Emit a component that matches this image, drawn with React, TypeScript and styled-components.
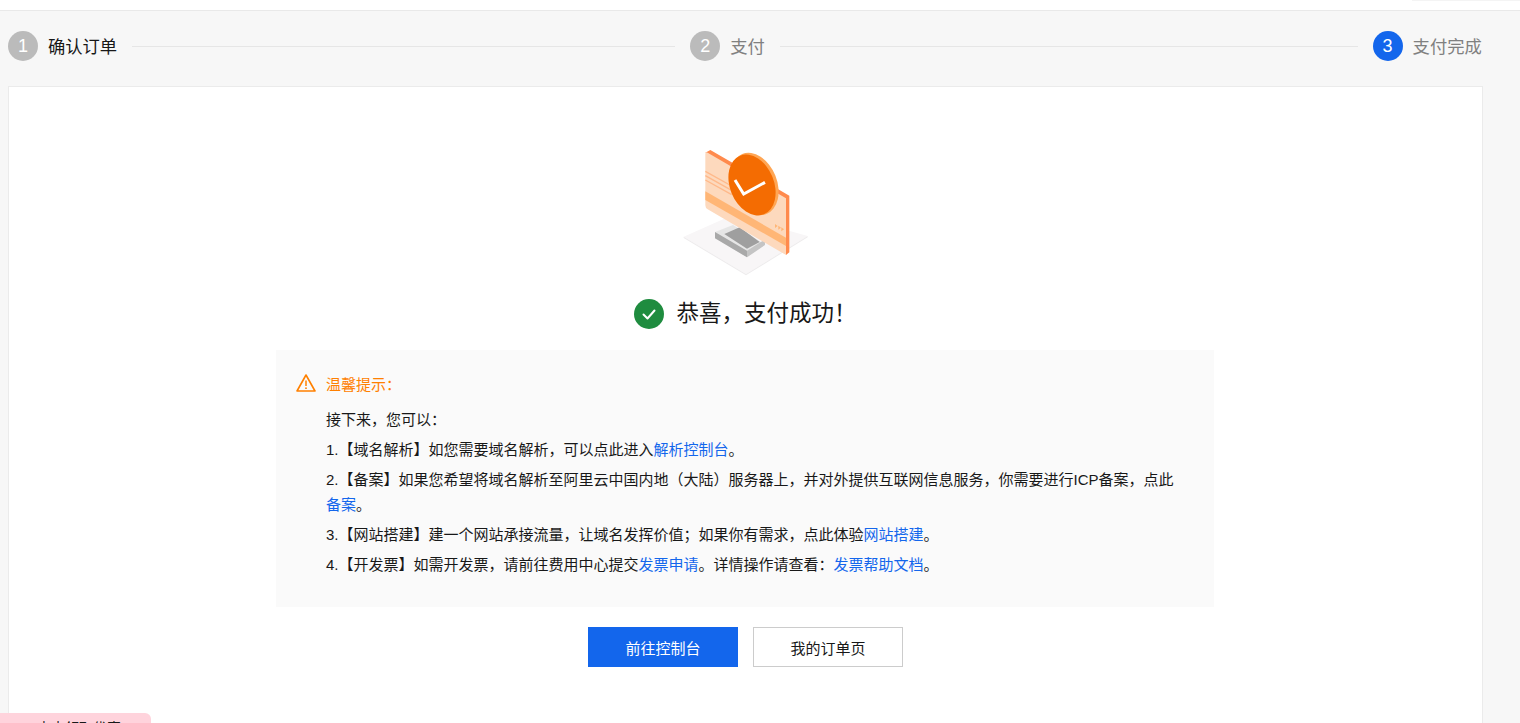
import React from "react";
import styled, { createGlobalStyle } from "styled-components";

const Global = createGlobalStyle`
  html, body { margin: 0; padding: 0; height: 723px; overflow: hidden; background: #f7f7f7; }
  body { font-family: "Liberation Sans", "Noto Sans CJK SC", sans-serif; color: #181818; }
  * { box-sizing: border-box; }
`;

const Header = styled.header`
  height: 11px;
  background: #fff;
  border-bottom: 1px solid #e9e9e9;
`;

const Main = styled.main`
  width: 1483px;
  padding-left: 8px;
`;

const Steps = styled.ol`
  display: flex;
  align-items: center;
  width: 1474.6px;
  height: 70px;
  margin: 0 0 5px;
  padding: 0;
  list-style: none;
`;

const Step = styled.li<{ $last?: boolean }>`
  display: flex;
  align-items: center;
  flex: ${(p) => (p.$last ? "0 0 110px" : "1 1 0")};
`;

const StepNumber = styled.span<{ $active?: boolean }>`
  flex: none;
  width: 30px;
  height: 30px;
  border-radius: 50%;
  display: flex;
  align-items: center;
  justify-content: center;
  font-size: 18px;
  color: #fff;
  background: ${(p) => (p.$active ? "#1366ec" : "#bbb")};
`;

const StepLabel = styled.span<{ $current?: boolean }>`
  flex: none;
  margin-left: 10px;
  padding-top: 1px;
  font-size: 17.3px;
  line-height: 30px;
  color: ${(p) => (p.$current ? "#181818" : "#808080")};
`;

const StepLine = styled.span`
  flex: 1;
  height: 1px;
  margin: 0 15px;
  background: #e6e6e6;
`;

const Card = styled.section`
  width: 1475px;
  height: 700px;
  padding-top: 43px;
  background: #fff;
  border: 1px solid #ebebeb;
  display: flex;
  flex-direction: column;
  align-items: center;
`;

const Illustration = styled.svg`
  display: block;
  width: 170px;
  height: 160px;
  flex: none;
`;

const Title = styled.h1`
  display: flex;
  align-items: center;
  gap: 12px;
  height: 30px;
  margin: 9px 0 0;
  font-size: 22.5px;
  font-weight: 400;
  line-height: 30px;
  color: #181818;
`;

const Notice = styled.div`
  width: 938px;
  height: 257px;
  margin: 21px 1px 0 0;
  padding: 21px 20px 0;
  background: #fafafa;
`;

const NoticeHead = styled.div`
  display: flex;
  align-items: center;
  gap: 10px;
  height: 24px;
  font-size: 15px;
  color: #ff8000;
`;

const NoticeBody = styled.div`
  margin-top: 12px;
  padding-left: 30px;
  padding-right: 4px;
  font-size: 15px;
  line-height: 25px;
  color: #181818;
`;

const NoticeLine = styled.p`
  margin: 0 0 5px;
`;

const Link = styled.a`
  color: #1366ec;
  text-decoration: none;
  white-space: nowrap;
`;

const Actions = styled.div`
  display: flex;
  gap: 15px;
  margin-top: 20px;
`;

const Button = styled.button<{ $primary?: boolean }>`
  width: 150px;
  height: 40px;
  padding: 0;
  font-family: inherit;
  font-size: 15px;
  color: ${(p) => (p.$primary ? "#fff" : "#181818")};
  background: ${(p) => (p.$primary ? "#1366ec" : "#fff")};
  border: 1px solid ${(p) => (p.$primary ? "#1366ec" : "#ccc")};
`;

const FloatBadge = styled.div`
  position: fixed;
  left: 0;
  top: 713px;
  width: 151px;
  height: 40px;
  padding: 5px 0 0 37px;
  font-size: 14px;
  line-height: 20px;
  color: #181818;
  background: #ffd3dc;
  border-radius: 0 6px 0 0;
`;

const HeaderTab = styled.div`
  position: fixed;
  top: 0;
  right: 0;
  width: 108px;
  height: 1px;
  background: #f4f4f4;
`;

function SuccessArt() {
  return (
    <Illustration viewBox="0 0 510 480" aria-hidden="true">
      <polygon points="68,320 215,255 440,318 255,432" fill="#f8f6f7" />
      <polygon points="68,320 255,432 440,318 440,322 255,436 68,324" fill="#eeeced" />
      <polygon points="162,306 216,285 312,343 258,381 162,325" fill="#e6e6e6" />
      <polygon points="162,306 258,362 258,382 162,325" fill="#a9a9a9" />
      <polygon points="258,362 312,328 312,345 258,382" fill="#c4c4c4" />
      <polygon points="190,312 236,292 296,336 258,356" fill="#9f9f9f" />
      <polygon points="133,68 148,60 385,197 385,367 375,375 373,208" fill="#ff8a4d" />
      <path d="M133 72 Q133 65 140 68 L375 205 L375 375 L140 238 Q133 234 133 226 Z" fill="#fdd9bd" />
      <polygon points="133,184 375,323 375,348 133,210" fill="#ffb676" />
      <path d="M133 124 L212 168 M133 137 L212 181 M133 150 L212 194" stroke="#ffb98a" strokeWidth="4" fill="none" />
      <polygon points="342,282 350,288 342,294" fill="#ffb676" />
      <polygon points="352,287 360,293 352,299" fill="#ffb676" />
      <polygon points="361,292 369,298 361,304" fill="#ffb676" />
      <ellipse cx="280" cy="162" rx="68" ry="97" transform="rotate(-22 280 162)" fill="#ffa654" />
      <ellipse cx="273" cy="165" rx="66" ry="95" transform="rotate(-22 273 165)" fill="#f46c02" />
      <polyline points="222,150 248,192 312,157" fill="none" stroke="#fff" strokeWidth="9" />
    </Illustration>
  );
}

function SuccessIcon() {
  return (
    <svg width="30" height="30" viewBox="0 0 30 30" aria-hidden="true">
      <circle cx="15" cy="15" r="15" fill="#1f8c3f" />
      <polyline points="9.5,15.5 13.5,19.5 20.5,11.5" fill="none" stroke="#fff" strokeWidth="2" strokeLinecap="round" strokeLinejoin="round" />
    </svg>
  );
}

function WarnIcon() {
  return (
    <svg width="20" height="20" viewBox="0 0 20 20" aria-hidden="true">
      <path d="M10 2 L19 18 L1 18 Z" fill="none" stroke="#ff8000" strokeWidth="1.6" strokeLinejoin="round" />
      <path d="M10 7.5 V13" stroke="#ff8000" strokeWidth="1.5" />
      <circle cx="10" cy="15.2" r="0.9" fill="#ff8000" />
    </svg>
  );
}

export default function App() {
  return (
    <>
      <Global />
      <Header />
      <HeaderTab />
      <Main>
        <Steps>
          <Step>
            <StepNumber>1</StepNumber>
            <StepLabel $current>确认订单</StepLabel>
            <StepLine />
          </Step>
          <Step>
            <StepNumber>2</StepNumber>
            <StepLabel>支付</StepLabel>
            <StepLine />
          </Step>
          <Step $last>
            <StepNumber $active>3</StepNumber>
            <StepLabel>支付完成</StepLabel>
          </Step>
        </Steps>
        <Card>
          <SuccessArt />
          <Title>
            <SuccessIcon />
            恭喜，支付成功！
          </Title>
          <Notice>
            <NoticeHead>
              <WarnIcon />
              温馨提示：
            </NoticeHead>
            <NoticeBody>
              <NoticeLine>接下来，您可以：</NoticeLine>
              <NoticeLine>
                1.【域名解析】如您需要域名解析，可以点此进入<Link href="#">解析控制台</Link>。
              </NoticeLine>
              <NoticeLine>
                2.【备案】如果您希望将域名解析至阿里云中国内地（大陆）服务器上，并对外提供互联网信息服务，你需要进行ICP备案，点此
                <Link href="#">备案</Link>。
              </NoticeLine>
              <NoticeLine>
                3.【网站搭建】建一个网站承接流量，让域名发挥价值；如果你有需求，点此体验<Link href="#">网站搭建</Link>。
              </NoticeLine>
              <NoticeLine>
                4.【开发票】如需开发票，请前往费用中心提交<Link href="#">发票申请</Link>。详情操作请查看：<Link href="#">发票帮助文档</Link>。
              </NoticeLine>
            </NoticeBody>
          </Notice>
          <Actions>
            <Button $primary>前往控制台</Button>
            <Button>我的订单页</Button>
          </Actions>
        </Card>
      </Main>
      <FloatBadge>点击领取优惠</FloatBadge>
    </>
  );
}
